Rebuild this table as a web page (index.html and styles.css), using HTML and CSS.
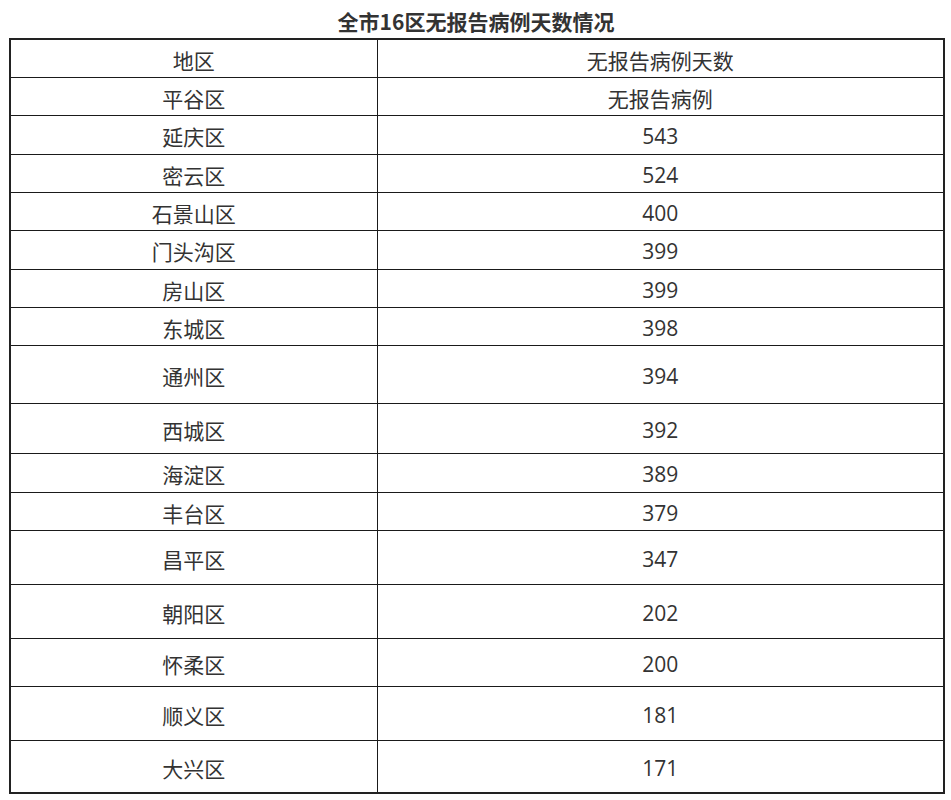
FILE: index.html
```html
<!DOCTYPE html>
<html lang="zh-CN">
<head>
<meta charset="utf-8">
<link rel="stylesheet" href="styles.css">
</head>
<body>
<div class="page">
  <h1 class="title">全市16区无报告病例天数情况</h1>
  <table class="data">
    <colgroup><col class="c1"><col class="c2"></colgroup>
    <tbody>
      <tr class="h38"><td>地区</td><td>无报告病例天数</td></tr>
      <tr class="h38"><td>平谷区</td><td>无报告病例</td></tr>
      <tr class="h39"><td>延庆区</td><td class="num">543</td></tr>
      <tr class="h38"><td>密云区</td><td class="num">524</td></tr>
      <tr class="h38"><td>石景山区</td><td class="num">400</td></tr>
      <tr class="h39"><td>门头沟区</td><td class="num">399</td></tr>
      <tr class="h38"><td>房山区</td><td class="num">399</td></tr>
      <tr class="h38"><td>东城区</td><td class="num">398</td></tr>
      <tr class="h58"><td>通州区</td><td class="num">394</td></tr>
      <tr class="h50"><td>西城区</td><td class="num">392</td></tr>
      <tr class="h39"><td>海淀区</td><td class="num">389</td></tr>
      <tr class="h38"><td>丰台区</td><td class="num">379</td></tr>
      <tr class="h54"><td>昌平区</td><td class="num">347</td></tr>
      <tr class="h54"><td>朝阳区</td><td class="num">202</td></tr>
      <tr class="h48"><td>怀柔区</td><td class="num">200</td></tr>
      <tr class="h54"><td>顺义区</td><td class="num">181</td></tr>
      <tr class="h53"><td>大兴区</td><td class="num">171</td></tr>
    </tbody>
  </table>
</div>
</body>
</html>
```
FILE: styles.css
```css
html, body {
  margin: 0;
  padding: 0;
  background: #ffffff;
}
.page {
  padding: 0 8px 0 9px;
  font-family: "Noto Sans CJK SC", "Noto Sans", sans-serif;
  color: #333333;
}
.title {
  margin: 0;
  height: 38px;
  line-height: 42px;
  text-align: center;
  font-size: 21px;
  font-weight: 700;
  color: #333333;
}
.data {
  width: 934px;
  border-collapse: collapse;
  table-layout: fixed;
  border: 2px solid #222222;
}
.c1 { width: 367px; }
.c2 { width: 567px; }
.data td {
  border: 1px solid #1a1a1a;
  text-align: center;
  vertical-align: middle;
  padding: 3px 0 0 0;
  font-size: 21px;
  line-height: 24px;
  color: #333333;
}
.data td.num {
  font-family: "Open Sans", "Noto Sans", sans-serif;
  font-size: 21px;
}
.h38 { height: 38px; }
.h39 { height: 39px; }
.h48 { height: 48px; }
.h50 { height: 50px; }
.h53 { height: 53px; }
.h54 { height: 54px; }
.h58 { height: 58px; }
```
